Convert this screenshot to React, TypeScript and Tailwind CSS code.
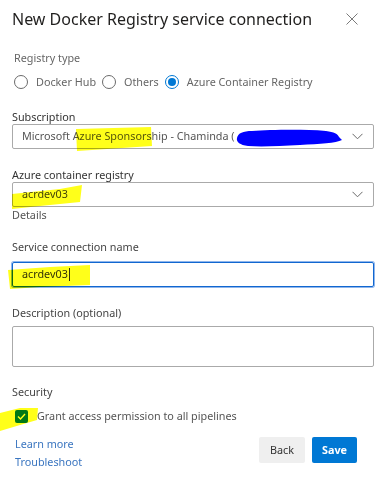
export default function App() {
  const radio = (checked: boolean) =>
    checked ? (
      <span className="flex h-[14px] w-[14px] items-center justify-center rounded-full border border-[#0078d4]">
        <span className="h-[8px] w-[8px] rounded-full bg-[#0078d4]" />
      </span>
    ) : (
      <span className="h-[14px] w-[14px] rounded-full border border-[#6b6b6b]" />
    );

  const chevron = (
    <svg width="11" height="7" viewBox="0 0 11 7" className="mr-[10px]">
      <polyline points="0.5,0.8 5.5,5.8 10.5,0.8" fill="none" stroke="#6a6a6a" strokeWidth="1" />
    </svg>
  );

  return (
    <div className="relative h-[484px] w-[378px] overflow-hidden bg-white font-['Noto_Sans',sans-serif] text-[#333]">
      <div className="pl-3 pr-1 pt-[7px]">
        {/* header */}
        <div className="flex h-6 items-center justify-between pr-[16px]">
          <h1 className="text-[16px] leading-6 text-[#201f1e]">New Docker Registry service connection</h1>
          <svg width="12" height="12" viewBox="0 0 12 12">
            <path d="M0.5 0.5 L11.5 11.5 M11.5 0.5 L0.5 11.5" stroke="#7a7a7a" strokeWidth="1" />
          </svg>
        </div>

        <div className="mt-[19px] pl-[2px] text-[10.8px] leading-4 text-[#666]">Registry type</div>
        <div className="mt-[7px] flex h-[18px] items-center pl-[2px] text-[10.8px] text-[#666]">
          {radio(false)}
          <span className="ml-[8px] mr-[6px]">Docker Hub</span>
          {radio(false)}
          <span className="ml-[8px] mr-[6px]">Others</span>
          {radio(true)}
          <span className="ml-[8px]">Azure Container Registry</span>
        </div>

        <div className="mt-[18px] h-[15px] text-[10.8px] leading-[15px] text-[#333]">Subscription</div>
        <div className="flex h-[25px] items-center justify-between rounded-[2px] border border-[#aaa]">
          <span className="pl-[9px] text-[10.8px] text-[#555]">Microsoft Azure Sponsorship - Chaminda (</span>
          {chevron}
        </div>

        <div className="mt-[19px] h-[14px] text-[10.8px] leading-[14px] text-[#333]">Azure container registry</div>
        <div className="flex h-[25px] items-center justify-between rounded-[2px] border border-[#aaa]">
          <span className="pl-[9px] text-[10.8px] text-[#444]">acrdev03</span>
          {chevron}
        </div>
        <div className="h-[15px] text-[10.8px] leading-[15px] text-[#555]">Details</div>

        <div className="mt-[17px] h-4 text-[10.8px] leading-4 text-[#444]">Service connection name</div>
        <div className="mt-[7px] flex h-[25px] items-center rounded-[2px] border border-[#1167d0] shadow-[0_0_0_1px_#8fb6ec]">
          <span className="pl-[9px] text-[10.8px] text-[#333]">acrdev03</span>
          <span className="ml-[1px] h-[13px] w-px bg-[#333]" />
        </div>

        <div className="mt-[18px] h-4 text-[10.8px] leading-4 text-[#444]">Description (optional)</div>
        <div className="mt-[5px] h-[41px] rounded-[2px] border border-[#aaa]" />

        <div className="mt-[17px] h-4 text-[10.8px] leading-4 text-[#444]">Security</div>
        <div className="mt-[7px] flex h-[18px] items-center pl-[3px] text-[10.8px] text-[#555]">
          <span className="flex h-[13px] w-[13px] items-center justify-center rounded-[2px] bg-[#0078d4]">
            <svg width="9" height="7" viewBox="0 0 9 7">
              <polyline points="1,3.5 3.5,6 8,1" fill="none" stroke="#fff" strokeWidth="1.4" />
            </svg>
          </span>
          <span className="ml-[9px]">Grant access permission to all pipelines</span>
        </div>

        <div className="mt-[11px] flex items-start justify-between pr-[17px]">
          <div className="flex flex-col gap-[2px] pl-[3px] text-[10.8px] leading-4 text-[#3b76c0]">
            <a>Learn more</a>
            <a>Troubleshoot</a>
          </div>
          <div className="mt-px flex gap-[7px] text-[10.8px]">
            <button className="h-[26px] w-[46px] rounded-[2px] bg-[#efefef] text-[#333]">Back</button>
            <button className="h-[26px] w-[45px] rounded-[2px] bg-[#0078d4] font-bold text-white">Save</button>
          </div>
        </div>
      </div>

      {/* highlighter marks and redaction scribble from the original screenshot */}
      <svg className="pointer-events-none absolute inset-0 mix-blend-multiply" width="378" height="484" viewBox="0 0 378 484">
        <polygon points="76,129 151,127 152,146 77,151" fill="#ffff1a" />
        <polygon points="12,194 60,189 82,185 80,202 40,206 12,209" fill="#ffff1a" />
        <polygon points="8,270 50,267 90,265 90,285 40,287 10,289" fill="#ffff1a" />
        <polygon points="0,413 20,408 38,408 37,420 20,425 0,431" fill="#ffff1a" />
        <path
          d="M237,138 C238,133 243,131 252,131 C270,130 300,129 326,131 C334,132 338,134 339,137 L342,140 C336,143 320,144 300,145 C280,146 262,147 248,146 C240,145 236,142 237,138 Z"
          fill="#0000ff"
        />
      </svg>
    </div>
  );
}
